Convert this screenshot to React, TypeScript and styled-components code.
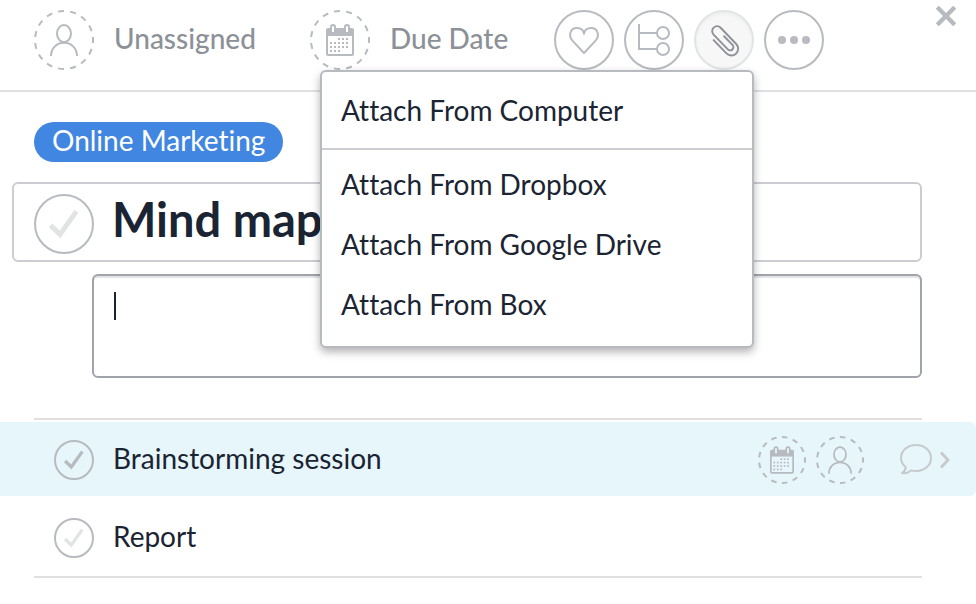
import React, { useState } from "react";
import styled, { createGlobalStyle, css } from "styled-components";

const colors = {
  ink: "#1b2432",
  muted: "#8c9197",
  icon: "#b7bbc0",
  faint: "#e1e4e5",
  rule: "#e0e0e0",
  blue: "#4186e0",
  highlight: "#e7f6fb",
};

const GlobalStyle = createGlobalStyle`
  *, *::before, *::after { box-sizing: border-box; }
  body {
    margin: 0;
    background: #ffffff;
    color: ${colors.ink};
    font-family: Lato, "Open Sans", sans-serif;
    font-size: 28px;
    line-height: 32px;
    font-variant-ligatures: none;
  }
  button, input, textarea { font: inherit; color: inherit; }
  svg { display: block; flex: none; }
`;

const Pane = styled.main`
  width: 100%;
`;

const Header = styled.header`
  display: flex;
  align-items: flex-end;
  min-height: 92px;
  padding: 6px 20px 20px 34px;
  border-bottom: 2px solid ${colors.rule};
`;

const plainButton = css`
  margin: 0;
  padding: 0;
  border: 0;
  background: none;
  cursor: pointer;
`;

const Field = styled.button<{ $width: number }>`
  ${plainButton}
  display: flex;
  align-items: center;
  gap: 20px;
  flex: 0 0 ${(p) => p.$width}px;
  color: ${colors.muted};
  font-weight: 500;
  text-align: left;
`;

const FieldLabel = styled.span`
  padding-bottom: 4px;
`;

const Actions = styled.div`
  display: flex;
  gap: 10px;
`;

const RoundButton = styled.button<{ $active?: boolean }>`
  ${plainButton}
  display: grid;
  place-items: center;
  width: 60px;
  height: 60px;
  border: 2px solid ${(p) => (p.$active ? colors.faint : colors.icon)};
  border-radius: 50%;
  color: ${(p) => (p.$active ? "#8d9299" : colors.icon)};
  background: ${(p) => (p.$active ? "#f7f7f7" : "transparent")};
  box-shadow: ${(p) => (p.$active ? "inset 0 2px 3px #ebedee" : "none")};
`;

const CloseButton = styled.button`
  ${plainButton}
  align-self: flex-start;
  margin-left: auto;
  color: ${colors.icon};
`;

const MenuAnchor = styled.div`
  position: relative;
`;

const Menu = styled.div`
  position: absolute;
  z-index: 2;
  top: 100%;
  right: 0;
  width: 434px;
  border: 2px solid ${colors.icon};
  border-radius: 6px;
  background: #ffffff;
  box-shadow: 0 4px 8px rgba(0, 0, 0, 0.3);
`;

const MenuGroup = styled.div`
  padding: 8px 0;

  & + & {
    padding: 4px 0 12px;
    border-top: 2px solid #cbcdd2;
  }
`;

const MenuItem = styled.button`
  ${plainButton}
  display: block;
  width: 100%;
  height: 60px;
  padding: 0 19px;
  text-align: left;
`;

const Body = styled.div`
  padding-top: 30px;
`;

const ProjectTag = styled.a`
  display: inline-block;
  height: 40px;
  margin-left: 34px;
  padding: 2px 18px;
  border-radius: 20px;
  background: ${colors.blue};
  color: #ffffff;
  text-decoration: none;
  vertical-align: top;
`;

const TitleBox = styled.div`
  display: flex;
  align-items: center;
  gap: 18px;
  margin: 20px 54px 0 12px;
  padding: 10px 20px 6px;
  border: 2px solid #cbcdd2;
  border-radius: 6px;
`;

const TitleInput = styled.input`
  flex: 1;
  min-width: 0;
  height: 60px;
  padding: 0 0 10px;
  border: 0;
  outline: 0;
  background: none;
  font-size: 47px;
  font-weight: 700;
`;

const Description = styled.div`
  position: relative;
  margin: 12px 54px 40px 92px;
`;

const DescriptionInput = styled.textarea`
  display: block;
  width: 100%;
  height: 104px;
  padding: 14px 20px;
  border: 2px solid #a0a4aa;
  border-radius: 6px;
  outline: 0;
  resize: none;
  background: #ffffff;
  box-shadow: inset 0 2px 0 #e2e4e5;
  caret-color: transparent;
`;

const Caret = styled.span`
  position: absolute;
  top: 18px;
  left: 22px;
  width: 2px;
  height: 28px;
  background: ${colors.ink};
`;

const Rule = styled.hr`
  height: 2px;
  margin: 0 54px 0 34px;
  border: 0;
  background: ${colors.rule};
`;

const Subtasks = styled.ul`
  display: grid;
  gap: 4px;
  margin: 0;
  padding: 2px 0;
  list-style: none;
`;

const Subtask = styled.li<{ $selected?: boolean }>`
  display: flex;
  align-items: center;
  height: 74px;
  padding: 2px 26px 0 54px;
  border-radius: 0 6px 6px 0;
  background: ${(p) => (p.$selected ? colors.highlight : "transparent")};
`;

const SubtaskName = styled.label`
  flex: 1;
  padding: 0 0 4px 19px;
`;

const SubtaskTools = styled.div`
  display: flex;
  align-items: center;
  gap: 10px;
  color: ${colors.icon};
`;

const ToolButton = styled.button`
  ${plainButton}
`;

const DetailsButton = styled.button`
  ${plainButton}
  display: flex;
  align-items: center;
  gap: 8px;
  margin-left: 26px;
  color: #c6cacc;
`;

const CheckFrame = styled.span<{ $size: number }>`
  display: grid;
  flex: none;
  width: ${(p) => p.$size}px;
  height: ${(p) => p.$size}px;

  & > * { grid-area: 1 / 1; }
  & > svg { pointer-events: none; }
`;

const CheckInput = styled.input`
  appearance: none;
  width: 100%;
  height: 100%;
  margin: 0;
  border: 2px solid ${colors.icon};
  border-radius: 50%;
  cursor: pointer;
`;

function Check({ size, id, label, checked = false }: {
  size: number;
  id: string;
  label?: string;
  checked?: boolean;
}) {
  const [on, setOn] = useState(checked);
  return (
    <CheckFrame $size={size}>
      <CheckInput
        type="checkbox"
        id={id}
        aria-label={label}
        checked={on}
        onChange={(e) => setOn(e.target.checked)}
      />
      <svg width={size} height={size} viewBox="0 0 60 60" fill="none" aria-hidden="true">
        <path d="M16.6 31.4 26 40.4 42.4 17.4" stroke={on ? "#b7bbc0" : colors.faint} strokeWidth="5" />
      </svg>
    </CheckFrame>
  );
}

function DashedRing({ size, dashes, children }: {
  size: number;
  dashes: number;
  children: React.ReactNode;
}) {
  const inset = (60 - (size * 28) / 24) / 2;
  return (
    <svg width={size} height={size} viewBox={`0 0 ${size} ${size}`} fill="none" stroke={colors.icon} aria-hidden="true">
      <circle
        cx={size / 2}
        cy={size / 2}
        r={size / 2 - 1}
        strokeWidth="2"
        pathLength={dashes * 2}
        strokeDasharray="1 1"
        strokeDashoffset="0.5"
      />
      {size === 60 ? children : (
        <svg width={size} height={size} viewBox={`${inset} ${inset} ${60 - inset * 2} ${60 - inset * 2}`}>
          {children}
        </svg>
      )}
    </svg>
  );
}

function PersonGlyph() {
  return (
    <g strokeWidth="2">
      <ellipse cx="30" cy="23.6" rx="7" ry="8.6" />
      <path d="M17 46C17 38.5 22.5 32.8 30 32.8S43 38.5 43 46" />
    </g>
  );
}

const calendarDots = [
  [29, 29], [33, 29], [37, 29],
  [21, 33], [25, 33], [29, 33], [33, 33], [37, 33],
  [21, 37], [25, 37], [29, 37], [33, 37], [37, 37],
  [21, 41], [25, 41], [29, 41],
];

function CalendarGlyph({ paper = "#ffffff" }: { paper?: string }) {
  return (
    <g>
      <rect x="17" y="19" width="26" height="26" rx="1" strokeWidth="2" />
      <path d="M17 19H43V26H17Z" fill={colors.icon} stroke="none" />
      {[23, 37].map((x) => (
        <g key={x} stroke="none">
          <path d={`M${x - 3} 23V17a3 3 0 0 1 6 0V23Z`} fill={colors.icon} />
          <path d={`M${x - 1} 22V17a1 1 0 0 1 2 0V22Z`} fill={paper} />
        </g>
      ))}
      {calendarDots.map(([x, y]) => (
        <rect key={`${x}-${y}`} x={x - 1} y={y - 1} width="2" height="2" fill={colors.icon} stroke="none" />
      ))}
    </g>
  );
}

function ActionIcon({ children }: { children: React.ReactNode }) {
  return (
    <svg width="56" height="56" viewBox="2 2 56 56" fill="none" stroke="currentColor" strokeWidth="2" aria-hidden="true">
      {children}
    </svg>
  );
}

const cloudSources = ["Attach From Dropbox", "Attach From Google Drive", "Attach From Box"];

export default function App() {
  const [title, setTitle] = useState("Mind map");
  const [notes, setNotes] = useState("");

  return (
    <Pane>
      <GlobalStyle />
      <Header>
        <Field type="button" $width={276}>
          <DashedRing size={60} dashes={15}><PersonGlyph /></DashedRing>
          <FieldLabel>Unassigned</FieldLabel>
        </Field>
        <Field type="button" $width={244}>
          <DashedRing size={60} dashes={15}><CalendarGlyph /></DashedRing>
          <FieldLabel>Due Date</FieldLabel>
        </Field>
        <Actions>
          <RoundButton type="button" aria-label="Like">
            <ActionIcon>
              <path strokeLinejoin="round" d="M30 43 18.4 30.6C14.2 26 16 18 22.8 18 27 18 29.6 20.6 30 23.8 30.4 20.6 33 18 37.2 18 44 18 45.8 26 41.6 30.6Z" />
            </ActionIcon>
          </RoundButton>
          <RoundButton type="button" aria-label="Subtasks">
            <ActionIcon>
              <path d="M15 14V39H33M15 23H33" />
              <circle cx="39" cy="23" r="6" />
              <circle cx="39" cy="39" r="6" />
            </ActionIcon>
          </RoundButton>
          <MenuAnchor>
            <RoundButton type="button" aria-label="Attach" aria-haspopup="menu" aria-expanded="true" $active>
              <ActionIcon>
                <path
                  transform="translate(30.2 31) rotate(46)"
                  strokeWidth="1.9"
                  strokeLinecap="round"
                  d="M-8 7H10.5A6.8 6.8 0 0 0 10.5-6.6H-12A4.9 4.9 0 0 0-12 3.2H8.6A3.2 3.2 0 0 0 8.6-3.2H-3.5"
                />
              </ActionIcon>
            </RoundButton>
            <Menu role="menu">
              <MenuGroup role="group">
                <MenuItem type="button" role="menuitem">Attach From Computer</MenuItem>
              </MenuGroup>
              <MenuGroup role="group">
                {cloudSources.map((source) => (
                  <MenuItem key={source} type="button" role="menuitem">{source}</MenuItem>
                ))}
              </MenuGroup>
            </Menu>
          </MenuAnchor>
          <RoundButton type="button" aria-label="More actions">
            <ActionIcon>
              <g fill="currentColor" stroke="none">
                <circle cx="18" cy="30" r="4" />
                <circle cx="30" cy="30" r="4" />
                <circle cx="42" cy="30" r="4" />
              </g>
            </ActionIcon>
          </RoundButton>
        </Actions>
        <CloseButton type="button" aria-label="Close">
          <svg width="20" height="20" viewBox="0 0 20 20" fill="none" stroke="currentColor" strokeWidth="4.4" aria-hidden="true">
            <path d="M1.2 1.2 18.8 18.8M18.8 1.2 1.2 18.8" />
          </svg>
        </CloseButton>
      </Header>

      <Body>
        <ProjectTag href="#project">Online Marketing</ProjectTag>
        <TitleBox>
          <Check size={60} id="task-done" label="Complete task" />
          <TitleInput aria-label="Task name" value={title} onChange={(e) => setTitle(e.target.value)} />
        </TitleBox>
        <Description>
          <DescriptionInput aria-label="Description" value={notes} onChange={(e) => setNotes(e.target.value)} />
          <Caret />
        </Description>

        <Rule />
        <Subtasks>
          <Subtask $selected>
            <Check size={40} id="subtask-1" checked />
            <SubtaskName htmlFor="subtask-1">Brainstorming session</SubtaskName>
            <SubtaskTools>
              <ToolButton type="button" aria-label="Set due date">
                <DashedRing size={48} dashes={13}><CalendarGlyph paper={colors.highlight} /></DashedRing>
              </ToolButton>
              <ToolButton type="button" aria-label="Assign">
                <DashedRing size={48} dashes={13}><PersonGlyph /></DashedRing>
              </ToolButton>
              <DetailsButton type="button" aria-label="Open comments">
                <svg width="32" height="32" viewBox="0 0 32 32" fill="none" stroke="currentColor" strokeWidth="2" strokeLinejoin="round" aria-hidden="true">
                  <path d="M5.8 23.2C2.8 20.8 1 17.6 1 14 1 6.4 7.6 1 16 1S31 6.4 31 14 24.4 27 16 27C14 27 12.4 26.8 11 26.4 8.6 28.4 5 29.6 2 29.2 4.2 27.8 5.6 25.8 5.8 23.2Z" />
                </svg>
                <svg width="10" height="18" viewBox="0 0 10 18" fill="none" stroke="currentColor" strokeWidth="2.8" aria-hidden="true">
                  <path d="M1 1.4 8 9 1 16.6" />
                </svg>
              </DetailsButton>
            </SubtaskTools>
          </Subtask>
          <Subtask>
            <Check size={40} id="subtask-2" />
            <SubtaskName htmlFor="subtask-2">Report</SubtaskName>
          </Subtask>
        </Subtasks>
        <Rule />
      </Body>
    </Pane>
  );
}
